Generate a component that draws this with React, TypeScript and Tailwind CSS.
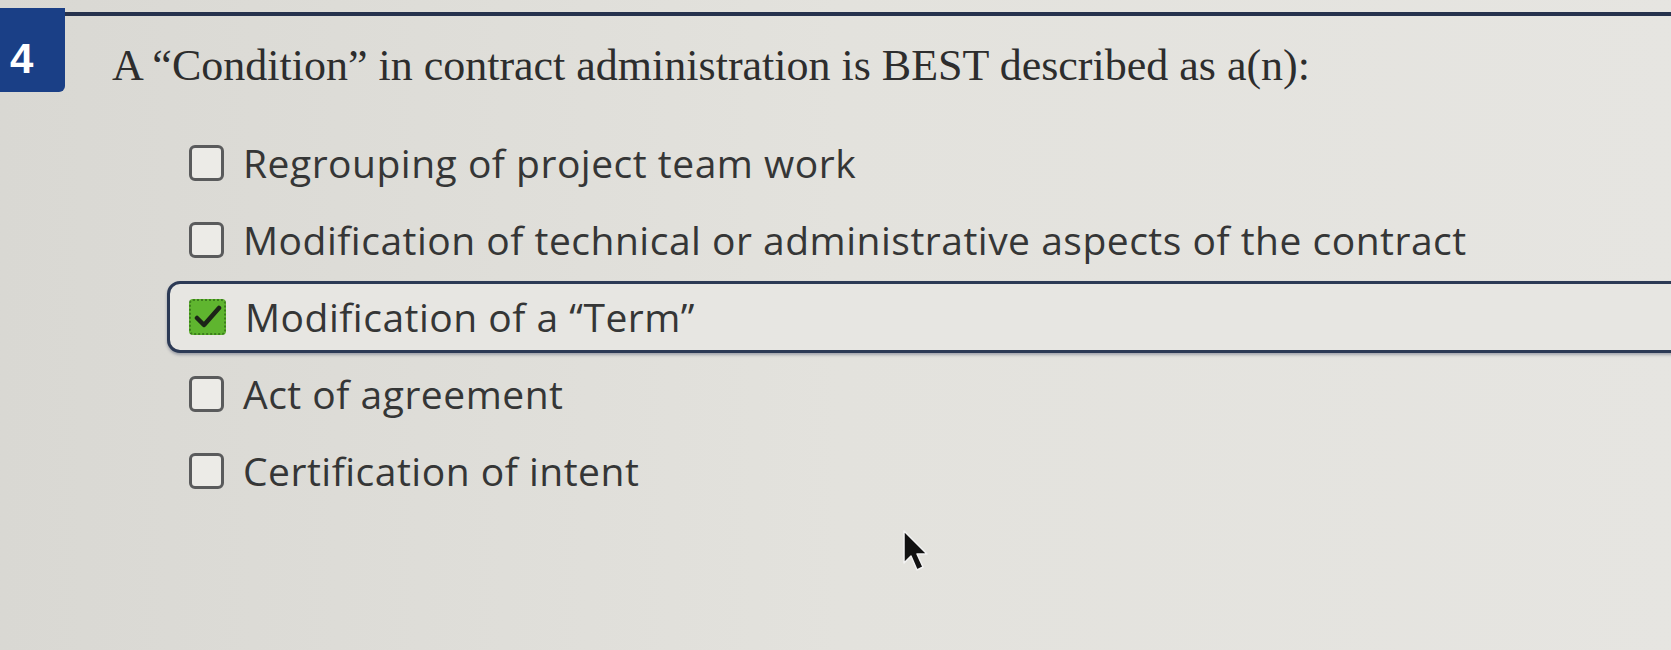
import React from 'react';

const options = [
  { label: 'Regrouping of project team work', checked: false },
  { label: 'Modification of technical or administrative aspects of the contract', checked: false },
  { label: 'Modification of a “Term”', checked: true },
  { label: 'Act of agreement', checked: false },
  { label: 'Certification of intent', checked: false },
];

function Box({ checked }: { checked: boolean }) {
  if (checked) {
    return (
      <div className="w-[37px] h-[36px] shrink-0 rounded-[4px] bg-[#5fb52f] border-[2px] border-dotted border-[#3c7f1c] flex items-center justify-center">
        <svg width="28" height="24" viewBox="0 0 28 24">
          <path d="M3 13 L10 20 L25 3" fill="none" stroke="#1c2418" strokeWidth="4.5" strokeLinecap="round" strokeLinejoin="round" />
        </svg>
      </div>
    );
  }
  return <div className="w-[35px] h-[36px] shrink-0 rounded-[6px] border-[3px] border-[#5a5b5c] bg-[#ecebe7]" />;
}

export default function App() {
  return (
    <div className="relative w-full h-[650px] overflow-hidden bg-gradient-to-r from-[#d9d8d3] via-[#e3e2dd] to-[#e6e5e1]">
      <div className="flex pt-[8px]">
        <div className="w-[65px] h-[84px] shrink-0 bg-[#1a3f86] rounded-br-[6px] pl-[10px] pt-[30px] text-white font-bold text-[42px] leading-[42px] [font-family:'Liberation_Sans',Arial,sans-serif]">
          4
        </div>
        <div className="flex-1 mt-[4px] border-t-[4px] border-[#26324d] pl-[47px] pt-[24px]">
          <h2 className="text-[44px] leading-[52px] text-[#2d2d2d] [font-family:'Liberation_Serif','Times_New_Roman',serif] whitespace-nowrap">
            A “Condition” in contract administration is BEST described as a(n):
          </h2>
        </div>
      </div>

      <ul className="ml-[167px] mr-[-30px] mt-[35px] flex flex-col gap-[5px]">
        {options.map((o) => (
          <li
            key={o.label}
            className={`h-[72px] flex items-center gap-[19px] pl-[19px] rounded-[13px] border-[3px] ${
              o.checked ? 'border-[#2c3a55] shadow-[0_2px_3px_rgba(40,50,80,0.35)] bg-[#e7e6e2]' : 'border-transparent'
            }`}
          >
            <Box checked={o.checked} />
            <span className="text-[39px] leading-[46px] tracking-[0.5px] text-[#353636] whitespace-nowrap [font-family:'Open_Sans','Noto_Sans',sans-serif]">
              {o.label}
            </span>
          </li>
        ))}
      </ul>

      <svg className="absolute left-[900px] top-[528px]" width="34" height="46" viewBox="0 0 34 46">
        <path d="M4 3 L4 35 L11 28 L17 42 L23 39 L17 26 L27 26 Z" fill="#111" stroke="#f2f2f2" strokeWidth="1.5" strokeLinejoin="round" />
      </svg>
    </div>
  );
}
